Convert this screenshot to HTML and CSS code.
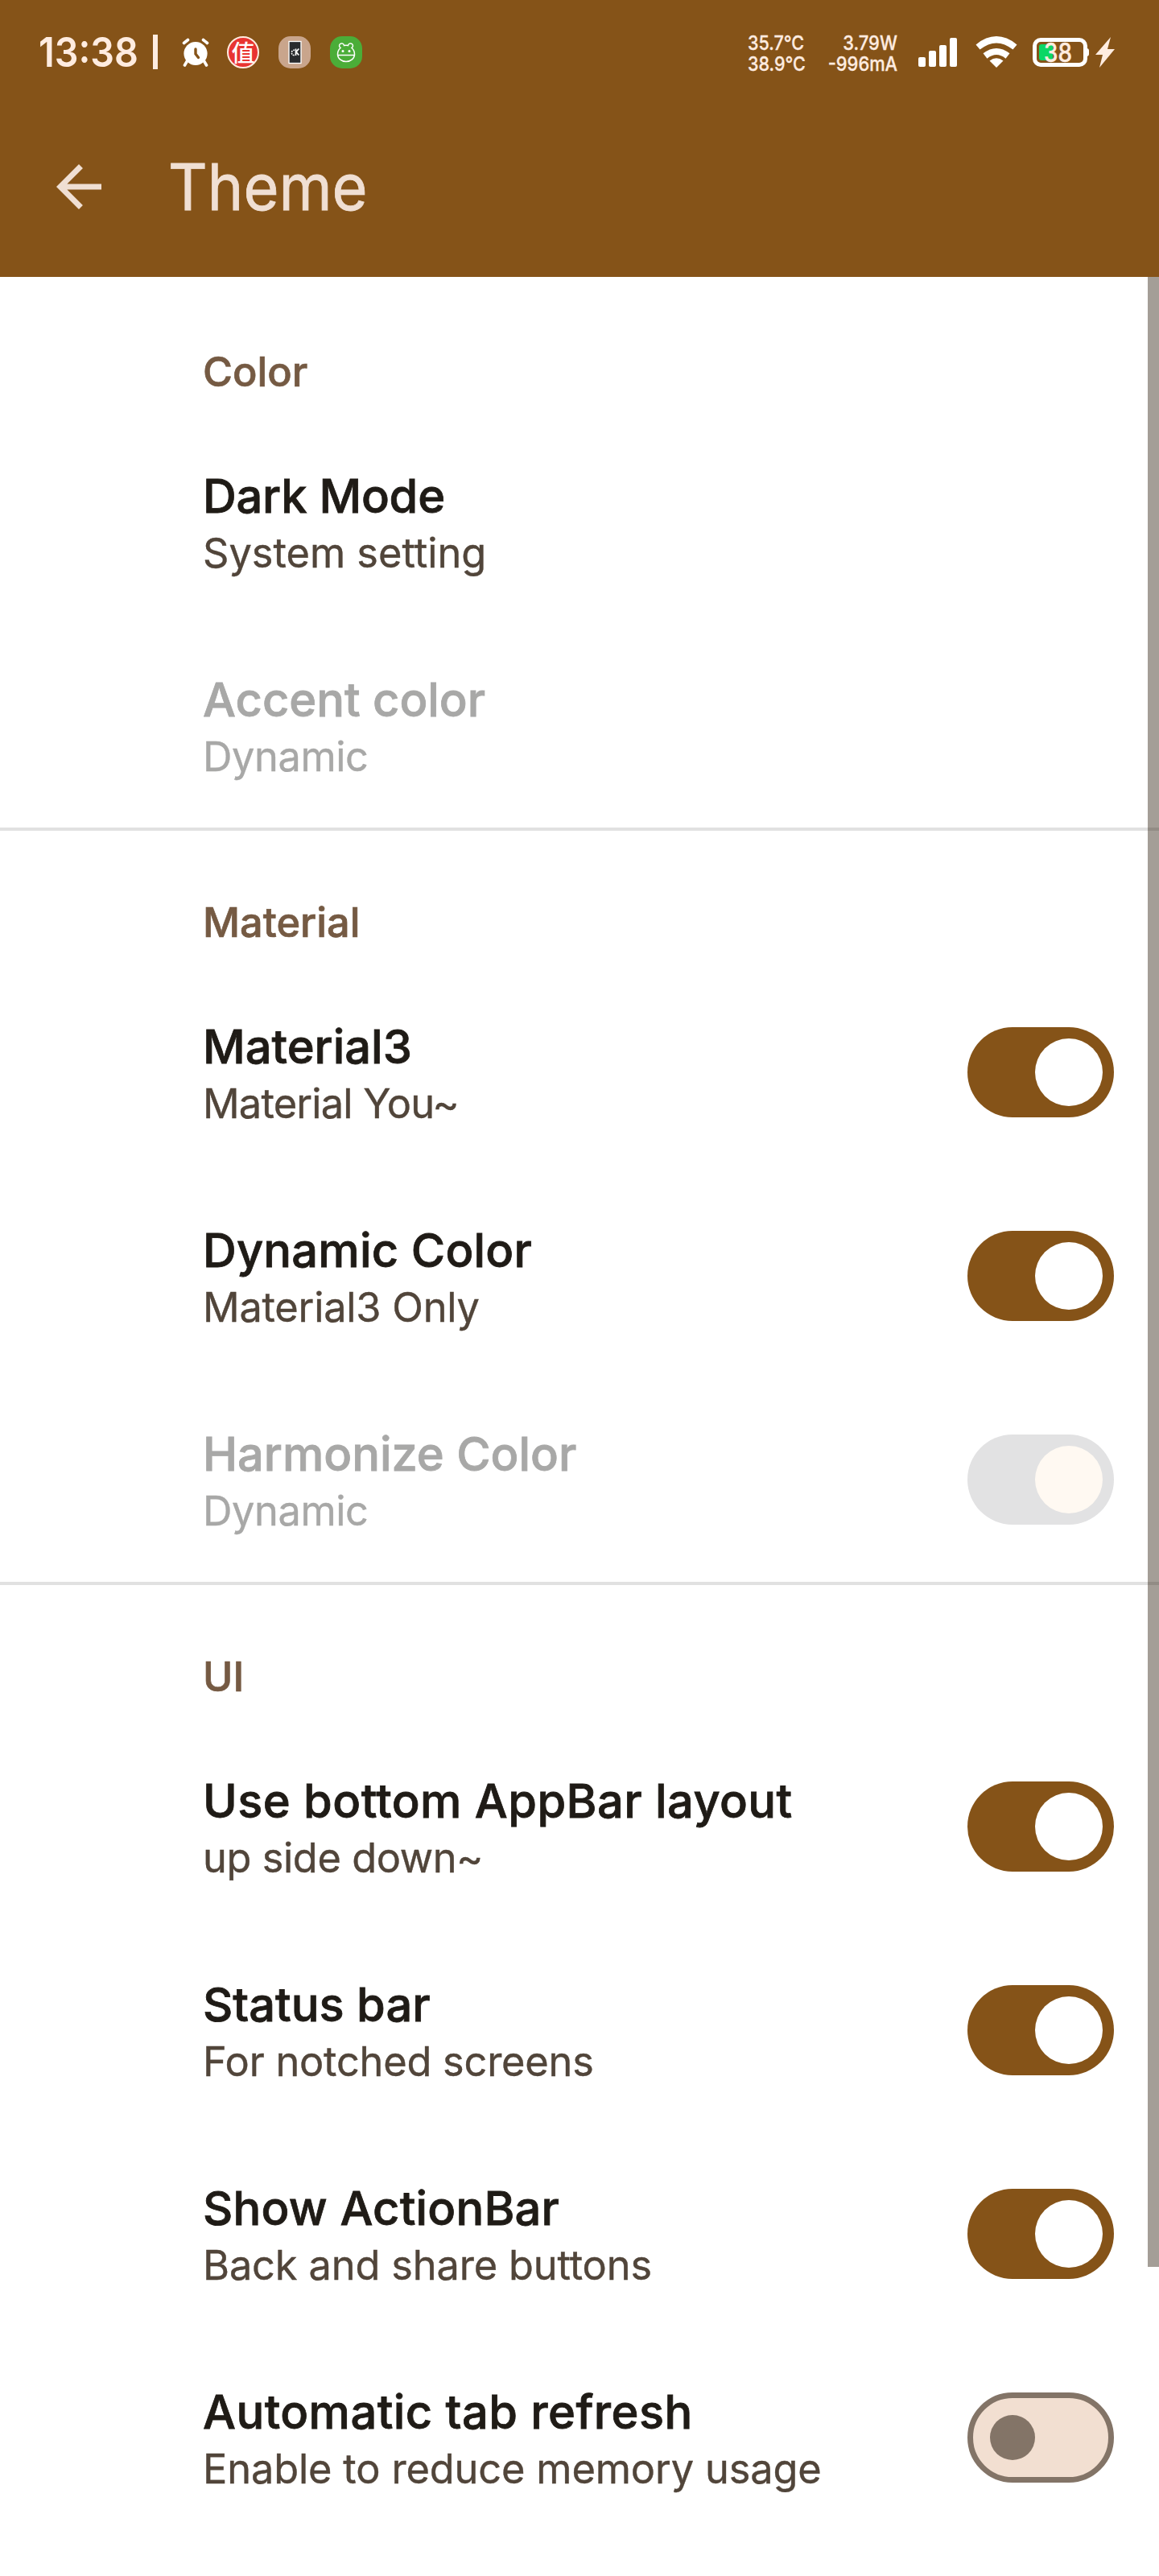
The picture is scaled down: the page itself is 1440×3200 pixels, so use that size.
FILE: index.html
```html
<!DOCTYPE html>
<html lang="en">
<head>
<meta charset="utf-8">
<title>Theme</title>
<link rel="stylesheet" href="styles.css">
</head>
<body>
<div class="screen">
  <header class="header">
    <div class="status">
      <div class="status-left">
        <span class="clock">13:38</span>
        <span class="bar"></span>
        <svg class="alarm" viewBox="0 0 34 38"><g stroke="#fff" stroke-width="3.600" stroke-linecap="round"><path d="M2.500 7.500l5-4M31.500 7.500l-5-4M7 29l-3.500 6M27 29l3.500 6"/></g><circle cx="17" cy="20.500" r="14.600" fill="#fff"/><path d="M17 15v6l3.500 4.500" fill="none" stroke="#855318" stroke-width="3.400" stroke-linecap="round"/></svg>
        <span class="app app-deal">值</span>
        <span class="app app-kde"><svg viewBox="0 0 40 40"><rect x="13" y="6.500" width="15" height="27" fill="#292b2e" stroke="#fff" stroke-width="1.300"/><path d="M21.500 15.500v8M25.300 15.500l-3.300 4 3.300 4" fill="none" stroke="#fff" stroke-width="1.700"/><path d="M20 17.200a3.300 3.300 0 1 0 2 5.600" fill="none" stroke="#fff" stroke-width="1.600" stroke-dasharray="1.800 1"/></svg></span>
        <span class="app app-bear"><svg viewBox="0 0 40 40" fill="none" stroke="#fff" stroke-width="1.500"><path d="M13 14.500a3 3 0 1 1 4.500-3q2.500-.7 5 0a3 3 0 1 1 4.500 3q3.500 3 3.500 8a10.500 9 0 0 1-21 0q0-5 3.500-8zM9.500 23.500h21"/><circle cx="16" cy="18.500" r=".8"/><circle cx="24" cy="18.500" r=".8"/></svg></span>
      </div>
      <div class="status-right">
        <div class="stats stats-temp"><span>35.7°C</span><span>38.9°C</span></div>
        <div class="stats stats-power"><span>3.79W</span><span>-996mA</span></div>
        <svg class="signal" viewBox="0 0 48 38" fill="#fff"><rect x="0" y="25" width="9" height="12" rx="2"/><rect x="13" y="17" width="9" height="20" rx="2"/><rect x="26" y="10" width="9" height="27" rx="2"/><rect x="39" y="1" width="9" height="36" rx="2"/></svg>
        <svg class="wifi" viewBox="0 0 52 40" fill="none" stroke="#fff" stroke-width="8"><path d="M3 13.500Q26-5 49 13.500M12 24.500q14-11 28 0"/><path d="M17.500 30.500q8.500-6.500 17 0L26 39z" fill="#fff" stroke="none"/></svg>
        <div class="battery"><span class="charge"></span><span class="percent">38</span></div>
        <svg class="bolt" viewBox="0 0 24 38" fill="#ffece0"><path d="M19 0L0 22h9L5 38 24 15h-9z"/></svg>
      </div>
    </div>
    <div class="appbar">
      <svg class="back" viewBox="0 0 24 24"><path fill="#f0dfd3" d="M20 11H7.830l5.590-5.590L12 4l-8 8 8 8 1.410-1.410L7.830 13H20v-2z"/></svg>
      <h1>Theme</h1>
    </div>
  </header>
  <main class="list">
    <section class="group">
      <h2>Color</h2>
      <div class="row"><div class="text"><h3 class="snug">Dark Mode</h3><p>System setting</p></div></div>
      <div class="row disabled"><div class="text"><h3>Accent color</h3><p class="tight">Dynamic</p></div></div>
    </section>
    <section class="group">
      <h2>Material</h2>
      <div class="row"><div class="text"><h3>Material3</h3><p class="tighter">Material You~</p></div><span class="switch"></span></div>
      <div class="row"><div class="text"><h3 class="open">Dynamic Color</h3><p class="snug">Material3 Only</p></div><span class="switch"></span></div>
      <div class="row disabled"><div class="text"><h3>Harmonize Color</h3><p class="tight">Dynamic</p></div><span class="switch"></span></div>
    </section>
    <section class="group">
      <h2>UI</h2>
      <div class="row"><div class="text"><h3 class="wide">Use bottom AppBar layout</h3><p class="tight">up side down~</p></div><span class="switch"></span></div>
      <div class="row"><div class="text"><h3>Status bar</h3><p class="snug">For notched screens</p></div><span class="switch"></span></div>
      <div class="row"><div class="text"><h3 class="open">Show ActionBar</h3><p class="slight">Back and share buttons</p></div><span class="switch"></span></div>
      <div class="row"><div class="text"><h3 class="wide">Automatic tab refresh</h3><p class="slight">Enable to reduce memory usage</p></div><span class="switch off"></span></div>
    </section>
    <div class="scrollbar"></div>
  </main>
</div>
</body>
</html>
```
FILE: styles.css
```css
* { box-sizing: border-box; margin: 0; padding: 0; }
body { background: #fff; font-family: Inter, "Noto Sans CJK SC", sans-serif; }
svg { display: block; flex: none; }
.screen { width: 1440px; height: 3200px; overflow: hidden; background: #fff; }

.header { height: 344px; background: #855318; color: #f0dfd3; }
.status { height: 120px; padding: 9px 55px 0 48px; display: flex; justify-content: space-between; align-items: center; color: #ffece0; }
.status-left, .status-right { display: flex; align-items: center; }
.clock { width: 142px; font-size: 51px; font-weight: 600; line-height: 60px; transform: scaleX(.916); transform-origin: left; }
.bar { width: 6px; height: 43px; background: #ffece0; margin-right: 30px; }
.alarm { width: 34px; height: 38px; margin-right: 22px; }
.app { width: 40px; height: 40px; margin-right: 24px; border-radius: 15px; flex: none; }
.app svg { width: 40px; height: 40px; }
.app-deal { border-radius: 50%; border: 2px solid #ffece0; background: #e83431; color: #fff; font: 500 29px/35px "Noto Sans CJK SC", sans-serif; text-align: center; }
.app-kde { background: #c9a58c; }
.app-bear { background: #4bad38; margin-right: 0; }

.stats { display: flex; flex-direction: column; margin-top: 3px; font-size: 24.600px; font-weight: 500; line-height: 26px; white-space: nowrap; -webkit-text-stroke: .3px; }
.stats-temp { width: 71px; margin-right: 28px; }
.stats-temp span { transform: scaleX(.875); transform-origin: left; }
.stats-power { width: 87px; margin-right: 26px; align-items: flex-end; }
.stats-power span { transform: scaleX(.89); transform-origin: right; }
.signal { width: 48px; height: 38px; margin-right: 23px; }
.wifi { width: 52px; height: 40px; margin-right: 19px; }
.battery { position: relative; width: 68px; height: 36px; margin-right: 10px; border: 5px solid #fff; border-radius: 10px; display: flex; align-items: center; padding-left: 3px; }
.battery::after { content: ""; position: absolute; right: -7px; top: 8px; width: 3px; height: 10px; border-radius: 0 3px 3px 0; background: #fff; }
.charge { width: 17px; height: 20px; border-radius: 3px; background: #0bd765; }
.percent { position: absolute; left: 9px; top: -1px; font-size: 32px; line-height: 30px; font-weight: 500; transform: scaleX(.87); transform-origin: left; -webkit-text-stroke: .4px; }
.bolt { width: 24px; height: 38px; }

.appbar { height: 224px; padding-left: 56px; display: flex; align-items: center; gap: 69px; }
.back { width: 84px; height: 84px; }
.appbar h1 { font-size: 79.500px; font-weight: 400; line-height: 96px; transform: scaleX(.95); transform-origin: left; -webkit-text-stroke: .8px; }

.list { position: relative; }
.group + .group { box-shadow: inset 0 4px #e1e1e1; }
.group h2 { height: 178px; padding: 88px 0 0 252px; font-size: 50.500px; font-weight: 500; line-height: 60px; color: #755a43; -webkit-text-stroke: .7px; }
.row { height: 253px; padding: 0 56px 1px 252px; display: flex; align-items: center; justify-content: space-between; }
.text { align-self: flex-start; padding-top: 58px; white-space: nowrap; }
.text h3 { font-size: 57.800px; font-weight: 500; line-height: 72px; color: #1f1b16; -webkit-text-stroke: .8px; }
.text p { font-size: 50.500px; line-height: 69px; color: #51453a; -webkit-text-stroke: .4px; }
.disabled .text h3, .disabled .text p { color: #a8a8a7; }

.text .tighter { letter-spacing: -.79px; }
.text .tight { letter-spacing: -.4px; }
.text .snug { letter-spacing: -.22px; }
.text .slight { letter-spacing: -.14px; }
.text .open { letter-spacing: .2px; }
.text .wide { letter-spacing: .46px; }

.switch { width: 182px; height: 112px; padding: 14px; border-radius: 56px; background: #855318; display: flex; justify-content: flex-end; align-items: center; }
.switch::before { content: ""; width: 84px; height: 84px; border-radius: 50%; background: #fff; }
.disabled .switch { background: #e2e2e3; }
.disabled .switch::before { background: #fff9f2; }
.switch.off { border: 7px solid #837467; padding: 0 21px; background: #f2dfd1; justify-content: flex-start; }
.switch.off::before { width: 56px; height: 56px; background: #837467; }

.scrollbar { position: absolute; top: 0; right: 0; width: 14px; height: 2472px; background: rgba(38, 25, 8, .42); }
```
